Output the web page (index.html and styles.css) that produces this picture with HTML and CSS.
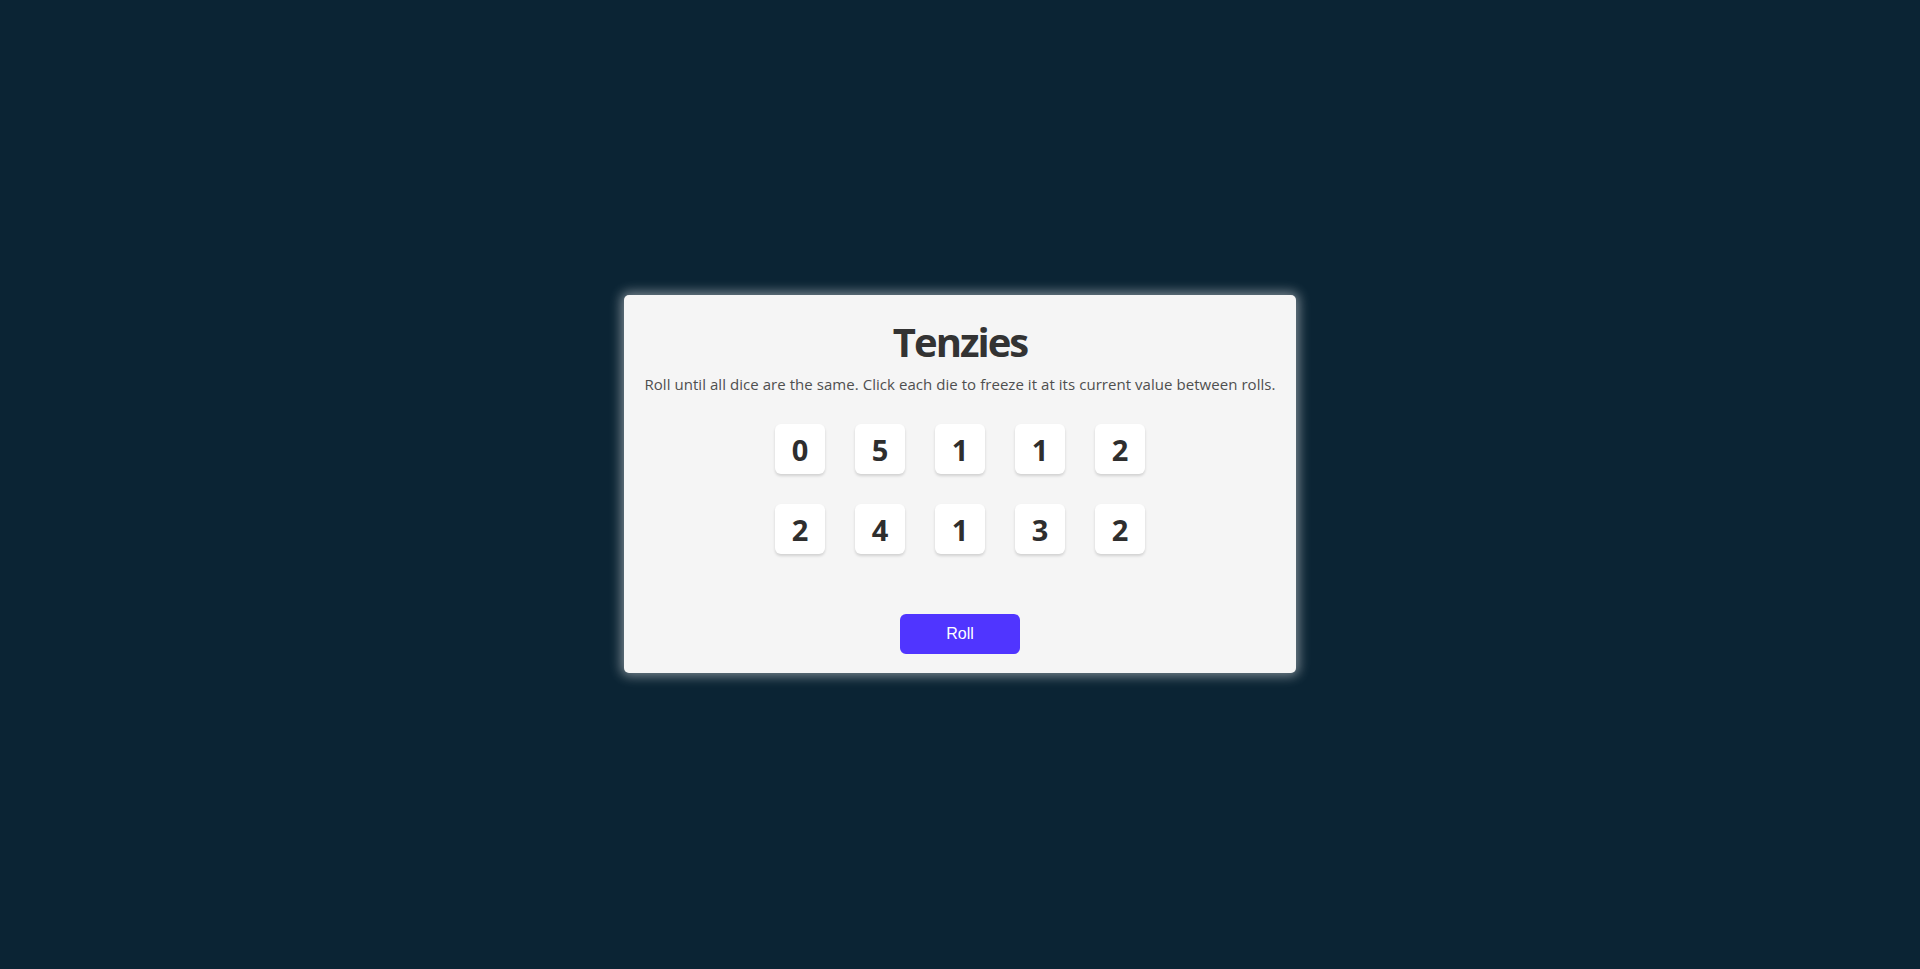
FILE: index.html
```html
<!DOCTYPE html>
<html lang="en">
<head>
<meta charset="utf-8">
<title>Tenzies</title>
<link rel="stylesheet" href="styles.css">
</head>
<body>
<main class="card">
  <h1 class="title">Tenzies</h1>
  <p class="instructions">Roll until all dice are the same. Click each die to freeze it at its current value between rolls.</p>
  <div class="dice">
    <button class="die">0</button>
    <button class="die">5</button>
    <button class="die">1</button>
    <button class="die">1</button>
    <button class="die">2</button>
    <button class="die">2</button>
    <button class="die">4</button>
    <button class="die">1</button>
    <button class="die">3</button>
    <button class="die">2</button>
  </div>
  <button class="roll">Roll</button>
</main>
</body>
</html>
```
FILE: styles.css
```css
html, body {
  margin: 0;
  height: 100%;
}
body {
  background: #0B2434;
  display: flex;
  align-items: center;
  justify-content: center;
  font-family: "Open Sans", "Noto Sans", sans-serif;
}
.card {
  box-sizing: border-box;
  width: 672px;
  height: 378px;
  margin-bottom: 1px;
  background: #F5F5F5;
  border-radius: 5px;
  box-shadow: 0 0 12px 3px rgba(255, 255, 255, 0.45);
  padding: 23px 12px 19px;
  display: flex;
  flex-direction: column;
  align-items: center;
}
.title {
  margin: 0;
  font-size: 40px;
  line-height: 48px;
  font-weight: 700;
  color: #333333;
  letter-spacing: -2px;
}
.instructions {
  margin: 8px 0 0;
  font-size: 15px;
  line-height: 20px;
  color: #4F4F4F;
  text-align: center;
  letter-spacing: 0.05px;
}
.dice {
  margin-top: 30px;
  display: grid;
  grid-template-columns: repeat(5, 50px);
  grid-auto-rows: 50px;
  gap: 30px;
}
.die {
  border: none;
  margin: 0;
  padding: 0;
  background: #FFFFFF;
  border-radius: 6px;
  box-shadow: 0 2px 3px rgba(0, 0, 0, 0.15);
  font-family: "Open Sans", "Noto Sans", sans-serif;
  font-size: 29px;
  font-weight: 700;
  color: #2E2E2E;
  display: flex;
  align-items: center;
  justify-content: center;
  cursor: pointer;
}
.roll {
  margin-top: auto;
  width: 120px;
  height: 40px;
  border: none;
  border-radius: 6px;
  background: #5035FF;
  color: #FFFFFF;
  font-family: "Liberation Sans", Arial, sans-serif;
  font-size: 16px;
  cursor: pointer;
}
```
